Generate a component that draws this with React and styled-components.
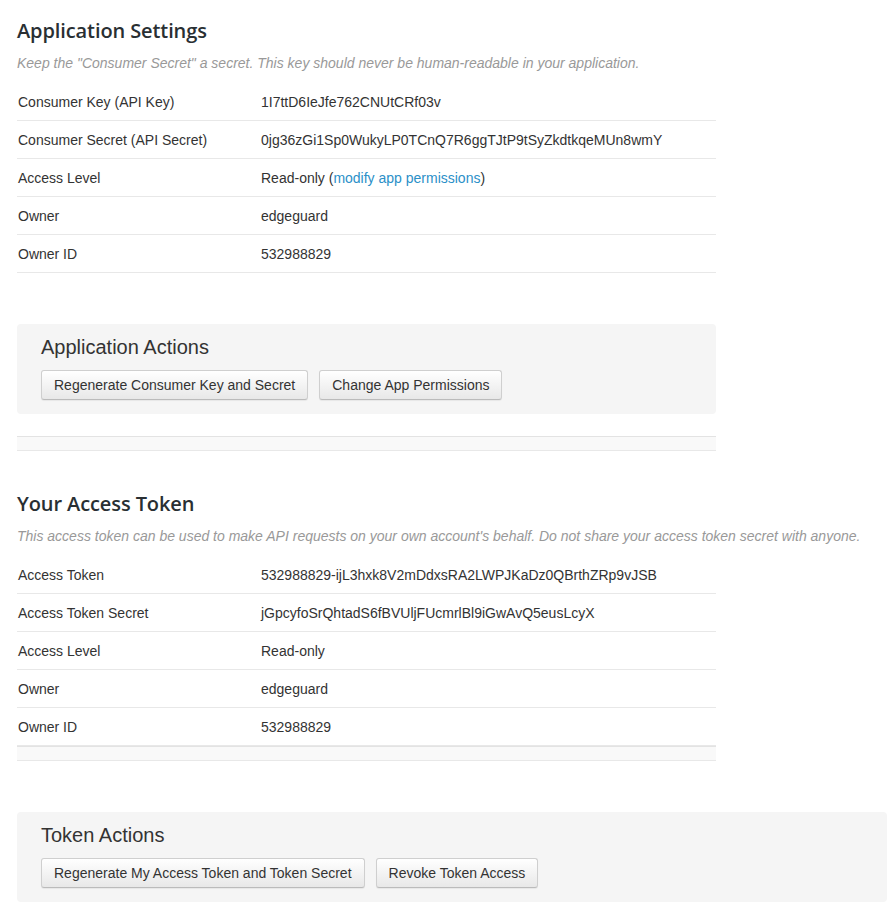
import React from "react";
import styled, { createGlobalStyle } from "styled-components";

const GlobalStyle = createGlobalStyle`
  body {
    margin: 0;
    background: #fff;
    font-family: "Liberation Sans", Arial, sans-serif;
    color: #333;
  }
`;

const Page = styled.div`
  padding: 0 0 17px 17px;
`;

const Section = styled.section`
  width: 699px;
`;

const Heading = styled.h2`
  margin: 0;
  padding-top: ${(p) => p.$top || 17}px;
  font-family: "Open Sans", "Liberation Sans", sans-serif;
  font-weight: 600;
  font-size: 20px;
  line-height: 28px;
  color: #292f33;
  letter-spacing: -0.1px;
`;

const Lead = styled.p`
  margin: 0;
  padding-top: 9px;
  height: 19px;
  font-size: 14px;
  line-height: 18px;
  font-style: italic;
  color: #999;
  white-space: nowrap;
`;

const Table = styled.div`
  margin-top: ${(p) => p.$top || 10}px;
`;

const Row = styled.div`
  display: grid;
  grid-template-columns: 244px 1fr;
  height: 37px;
  align-items: center;
  border-bottom: 1px solid #e8e8e8;
  font-size: 14px;
  color: #333;
`;

const Label = styled.span`
  padding-left: 1px;
`;

const Value = styled.span``;

const Link = styled.a`
  color: #2b90c8;
  text-decoration: none;
`;

const ActionBox = styled.div`
  margin-top: ${(p) => p.$top || 0}px;
  width: ${(p) => (p.$wide ? "870px" : "699px")};
  height: 90px;
  box-sizing: border-box;
  background: #f5f5f5;
  border-radius: 4px;
  padding: 12px 24px 0 24px;
`;

const ActionTitle = styled.h3`
  margin: 0;
  font-size: 20px;
  font-weight: 400;
  line-height: 22px;
  color: #333;
`;

const ButtonRow = styled.div`
  display: flex;
  gap: 11px;
  margin-top: 12px;
`;

const Button = styled.button`
  height: 30px;
  padding: 0 12px;
  font-family: "Liberation Sans", Arial, sans-serif;
  font-size: 14px;
  color: #333;
  background: linear-gradient(#fff, #e8e8e8);
  border: 1px solid #cfcfcf;
  border-bottom-color: #bbb;
  border-radius: 3px;
  box-shadow: 0 1px 1px rgba(0, 0, 0, 0.06);
  cursor: pointer;
`;

const Band = styled.div`
  margin-top: ${(p) => p.$top || 0}px;
  width: 699px;
  height: 13px;
  background: #f9f9f9;
  border-top: 1px solid #e3e3e3;
  border-bottom: 1px solid #e8e8e8;
`;

const appRows = [
  ["Consumer Key (API Key)", "1I7ttD6IeJfe762CNUtCRf03v"],
  ["Consumer Secret (API Secret)", "0jg36zGi1Sp0WukyLP0TCnQ7R6ggTJtP9tSyZkdtkqeMUn8wmY"],
  ["Access Level", null],
  ["Owner", "edgeguard"],
  ["Owner ID", "532988829"],
];

const tokenRows = [
  ["Access Token", "532988829-ijL3hxk8V2mDdxsRA2LWPJKaDz0QBrthZRp9vJSB"],
  ["Access Token Secret", "jGpcyfoSrQhtadS6fBVUljFUcmrlBl9iGwAvQ5eusLcyX"],
  ["Access Level", "Read-only"],
  ["Owner", "edgeguard"],
  ["Owner ID", "532988829"],
];

export default function App() {
  return (
    <Page>
      <GlobalStyle />
      <Section>
        <Heading>Application Settings</Heading>
        <Lead>
          Keep the "Consumer Secret" a secret. This key should never be human-readable in your application.
        </Lead>
        <Table>
          {appRows.map(([label, value]) => (
            <Row key={label}>
              <Label>{label}</Label>
              <Value>
                {value === null ? (
                  <>
                    Read-only (<Link href="#">modify app permissions</Link>)
                  </>
                ) : (
                  value
                )}
              </Value>
            </Row>
          ))}
        </Table>
        <ActionBox $top={51}>
          <ActionTitle>Application Actions</ActionTitle>
          <ButtonRow>
            <Button>Regenerate Consumer Key and Secret</Button>
            <Button>Change App Permissions</Button>
          </ButtonRow>
        </ActionBox>
        <Band $top={22} />
      </Section>
      <Section>
        <Heading $top={39}>Your Access Token</Heading>
        <Lead>
          This access token can be used to make API requests on your own account's behalf. Do not share your access token secret with anyone.
        </Lead>
        <Table>
          {tokenRows.map(([label, value]) => (
            <Row key={label}>
              <Label>{label}</Label>
              <Value>{value}</Value>
            </Row>
          ))}
        </Table>
        <Band />
      </Section>
      <ActionBox $top={51} $wide>
        <ActionTitle>Token Actions</ActionTitle>
        <ButtonRow>
          <Button>Regenerate My Access Token and Token Secret</Button>
          <Button>Revoke Token Access</Button>
        </ButtonRow>
      </ActionBox>
    </Page>
  );
}
